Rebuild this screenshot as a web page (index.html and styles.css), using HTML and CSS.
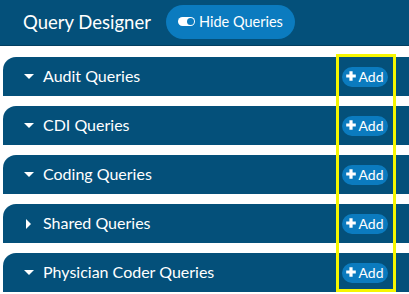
FILE: index.html
```html
<!DOCTYPE html>
<html>
<head>
<meta charset="utf-8">
<link rel="stylesheet" href="styles.css">
</head>
<body>
<header class="topbar">
  <h1 class="title">Query Designer</h1>
  <button class="hide-btn">
    <span class="toggle"><span class="knob"></span></span>
    Hide Queries
  </button>
</header>
<main class="groups">
  <div class="group">
    <span class="caret down"></span>
    <span class="group-name">Audit Queries</span>
    <button class="add-btn"><svg class="plus" viewBox="0 0 10 10"><path d="M3.4 0.2h3.2v3.2h3.2v3.2H6.6v3.2H3.4V6.6H0.2V3.4h3.2z" fill="#fff"/></svg>Add</button>
  </div>
  <div class="group">
    <span class="caret down"></span>
    <span class="group-name">CDI Queries</span>
    <button class="add-btn"><svg class="plus" viewBox="0 0 10 10"><path d="M3.4 0.2h3.2v3.2h3.2v3.2H6.6v3.2H3.4V6.6H0.2V3.4h3.2z" fill="#fff"/></svg>Add</button>
  </div>
  <div class="group">
    <span class="caret down"></span>
    <span class="group-name">Coding Queries</span>
    <button class="add-btn"><svg class="plus" viewBox="0 0 10 10"><path d="M3.4 0.2h3.2v3.2h3.2v3.2H6.6v3.2H3.4V6.6H0.2V3.4h3.2z" fill="#fff"/></svg>Add</button>
  </div>
  <div class="group">
    <span class="caret right"></span>
    <span class="group-name">Shared Queries</span>
    <button class="add-btn"><svg class="plus" viewBox="0 0 10 10"><path d="M3.4 0.2h3.2v3.2h3.2v3.2H6.6v3.2H3.4V6.6H0.2V3.4h3.2z" fill="#fff"/></svg>Add</button>
  </div>
  <div class="group">
    <span class="caret down"></span>
    <span class="group-name">Physician Coder Queries</span>
    <button class="add-btn"><svg class="plus" viewBox="0 0 10 10"><path d="M3.4 0.2h3.2v3.2h3.2v3.2H6.6v3.2H3.4V6.6H0.2V3.4h3.2z" fill="#fff"/></svg>Add</button>
  </div>
  <div class="highlight"></div>
</main>
</body>
</html>
```
FILE: styles.css
```css
* { box-sizing: border-box; }
html, body {
  margin: 0;
  padding: 0;
  background: #ffffff;
  font-family: Lato, "Open Sans", "Liberation Sans", sans-serif;
  overflow: hidden;
}
.topbar {
  height: 46px;
  background: #04507a;
  border-bottom: 1px solid #033f61;
  display: flex;
  align-items: center;
  padding-left: 23px;
  gap: 15px;
}
.title {
  margin: 0;
  color: #fff;
  font-size: 18.5px;
  font-weight: 400;
  padding-bottom: 1px;
}
.hide-btn {
  height: 34px;
  width: 129px;
  border: none;
  border-radius: 17px;
  background: #0b7bbf;
  color: #fff;
  font-family: inherit;
  font-size: 14.5px;
  font-weight: 400;
  display: flex;
  align-items: center;
  justify-content: center;
  gap: 4px;
  padding: 0 0 1px 0;
  margin-top: -1px;
}
.toggle {
  width: 17px;
  height: 9px;
  background: #fff;
  border-radius: 5px;
  position: relative;
  display: inline-block;
}
.knob {
  position: absolute;
  right: 1px;
  top: 1px;
  width: 7px;
  height: 7px;
  border-radius: 50%;
  background: #0b7bbf;
}
.groups {
  position: relative;
  padding: 11px 0 0 3px;
  display: flex;
  flex-direction: column;
  gap: 10px;
}
.group {
  height: 39px;
  background: #04507a;
  border-radius: 13px 13px 0 0;
  margin-right: -12px;
  display: flex;
  align-items: center;
  padding-left: 21px;
  color: #fff;
}
.caret {
  width: 0;
  height: 0;
  display: inline-block;
}
.caret.down {
  border-left: 5px solid transparent;
  border-right: 5px solid transparent;
  border-top: 5px solid #fff;
  margin-right: 9px;
}
.caret.right {
  border-top: 5px solid transparent;
  border-bottom: 5px solid transparent;
  border-left: 5px solid #fff;
  margin-left: 2px;
  margin-right: 12px;
}
.group-name {
  font-size: 16px;
  flex: 1;
  padding-bottom: 2px;
}
.add-btn {
  height: 20px;
  width: 46px;
  margin-right: 33px;
  border: none;
  border-radius: 10px;
  background: #0b7bbf;
  color: #fff;
  font-family: inherit;
  font-size: 14px;
  font-weight: 400;
  display: flex;
  align-items: center;
  justify-content: center;
  gap: 2px;
  padding: 0 0 1px 0;
}
.plus {
  width: 10px;
  height: 10px;
}
.highlight {
  position: absolute;
  left: 336px;
  top: 8px;
  width: 60px;
  height: 238px;
  border: 3px solid #f6f600;
}
```
